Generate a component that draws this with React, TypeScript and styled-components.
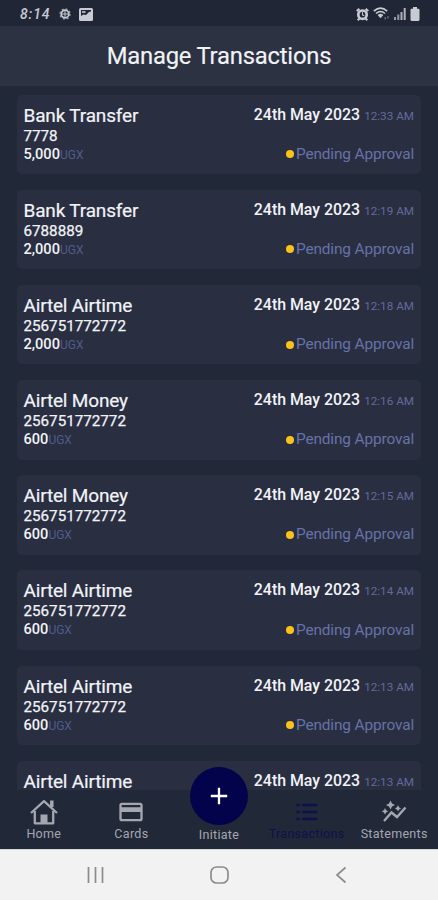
import React from 'react';
import styled, { createGlobalStyle } from 'styled-components';
import { MdCreditCard } from 'react-icons/md';

const GlobalStyle = createGlobalStyle`
  * { box-sizing: border-box; }
  body { margin: 0; background: #212837; font-family: Roboto, sans-serif; }
`;

const Screen = styled.div`
  width: 438px;
  height: 900px;
  display: flex;
  flex-direction: column;
  overflow: hidden;
  background: #212837;
  color: #f1f3f8;
`;

const StatusBar = styled.div`
  flex: 0 0 26px;
  display: flex;
  align-items: center;
  justify-content: space-between;
  padding: 2px 18px 0 20px;
  background: #212636;
  color: #c9cbd2;
`;

const StatusGroup = styled.div<{ $gap: number }>`
  display: flex;
  align-items: center;
  gap: ${(p) => p.$gap}px;
  svg { display: block; }
`;

const Clock = styled.span`
  width: 31px;
  font-size: 14px;
  line-height: 14px;
  font-style: italic;
  font-weight: 500;
  letter-spacing: 0.9px;
`;

const Header = styled.header`
  flex: 0 0 60px;
  display: flex;
  align-items: center;
  justify-content: center;
  background: #2c3242;
`;

const Title = styled.h1`
  margin: 0;
  font-size: 23.8px;
  line-height: 28px;
  font-weight: 400;
  letter-spacing: -0.2px;
  -webkit-text-stroke: 0.15px currentColor;
  white-space: nowrap;
`;

const List = styled.main`
  flex: 0 0 704px;
  display: flex;
  flex-direction: column;
  gap: 15.7px;
  padding: 8.5px 17px 0;
  overflow: hidden;
`;

const Card = styled.article`
  flex: 0 0 79.5px;
  display: flex;
  justify-content: space-between;
  padding: 9px 7px 0;
  border-radius: 5px;
  background: #292e41;
  white-space: nowrap;
`;

const Column = styled.div<{ $end?: boolean }>`
  display: flex;
  flex-direction: column;
  align-items: ${(p) => (p.$end ? 'flex-end' : 'flex-start')};
`;

const Name = styled.div`
  margin-left: -0.5px;
  font-size: 19px;
  line-height: 24px;
  letter-spacing: -0.17px;
  -webkit-text-stroke: 0.2px currentColor;
`;

const Account = styled.div`
  margin-left: -0.5px;
  font-size: 15.2px;
  line-height: 17px;
  -webkit-text-stroke: 0.25px currentColor;
`;

const Amount = styled.div`
  margin-left: -0.5px;
  font-size: 14.6px;
  line-height: 19px;
  font-weight: 500;
`;

const Currency = styled.span`
  font-size: 12px;
  font-weight: 400;
  color: #515c8c;
`;

const When = styled.div`
  font-size: 15.9px;
  line-height: 22.6px;
  font-weight: 500;
`;

const Time = styled.span`
  margin-left: 4px;
  font-size: 11.7px;
  font-weight: 400;
  color: #626b9a;
`;

const Status = styled.div`
  display: flex;
  align-items: center;
  gap: 2px;
  margin-top: 16.6px;
  font-size: 15.4px;
  line-height: 20px;
  letter-spacing: -0.13px;
  color: #6772a8;
`;

const Dot = styled.span`
  width: 8px;
  height: 8px;
  margin-top: 1px;
  border-radius: 50%;
  background: #fbc219;
`;

const TabBar = styled.nav`
  flex: 0 0 59px;
  display: grid;
  grid-template-columns: repeat(5, 87.6px);
  background: #212837;
`;

const Tab = styled.div<{ $active?: boolean }>`
  display: flex;
  flex-direction: column;
  align-items: center;
  padding-top: 8px;
  color: ${(p) => (p.$active ? '#0e1150' : '#a5a7b0')};
  svg { display: block; flex: 0 0 28px; }
`;

const TabLabel = styled.span`
  font-size: 12.5px;
  line-height: 16px;
  letter-spacing: 0.3px;
  white-space: nowrap;
`;

const InitiateTab = styled(Tab)`
  position: relative;
  padding-top: 37px;
`;

const InitiateButton = styled.div`
  position: absolute;
  top: -23px;
  left: 50%;
  width: 58px;
  height: 58px;
  transform: translateX(-50%);
  display: flex;
  align-items: center;
  justify-content: center;
  border-radius: 50%;
  background: #02034b;
  color: #fff;
`;

const SystemBar = styled.div`
  flex: 1;
  display: flex;
  align-items: center;
  justify-content: space-between;
  padding: 0 91px 0 86px;
  background: #f2f2f2;
  border-top: 1px solid #d8d9dc;
  color: #8c8c8c;
  svg { display: block; }
`;

const transactions = [
  ['Bank Transfer', '7778', '5,000', '12:33 AM'],
  ['Bank Transfer', '6788889', '2,000', '12:19 AM'],
  ['Airtel Airtime', '256751772772', '2,000', '12:18 AM'],
  ['Airtel Money', '256751772772', '600', '12:16 AM'],
  ['Airtel Money', '256751772772', '600', '12:15 AM'],
  ['Airtel Airtime', '256751772772', '600', '12:14 AM'],
  ['Airtel Airtime', '256751772772', '600', '12:13 AM'],
  ['Airtel Airtime', '256751772772', '600', '12:13 AM'],
];

const GearIcon = () => (
  <svg width="12" height="12" viewBox="0 0 12 12" fill="none" stroke="currentColor">
    <circle cx="6" cy="6" r="3.8" strokeWidth="1.7" />
    <circle cx="6" cy="6" r="5.1" strokeWidth="1.3" strokeDasharray="2 2" opacity=".7" />
    <path d="M6 3v6M3 6h6" strokeWidth="1" />
  </svg>
);

const PictureIcon = () => (
  <svg width="14" height="13" viewBox="0 0 14 13">
    <rect width="14" height="13" rx="1.5" fill="currentColor" />
    <path d="M2 8l2.5-1.5L7 7l3-3 2-.5V2H2z" fill="#212636" />
    <path d="M3 3.2h3.5v1.6H3z" fill="currentColor" />
  </svg>
);

const AlarmIcon = () => (
  <svg width="13" height="13" viewBox="0 0 13 13" fill="none" stroke="currentColor">
    <path d="M.7 3L3.4.9M12.3 3L9.6.9M1.7 12.2l2-2M11.3 12.2l-2-2" strokeWidth="2" />
    <circle cx="6.5" cy="6.7" r="4.2" strokeWidth="2.7" />
    <path d="M6.5 4.3v2.6l1.8.8" strokeWidth="1.1" />
  </svg>
);

const WifiIcon = () => (
  <svg width="17" height="14" viewBox="0 0 17 14" fill="none" stroke="currentColor">
    <path d="M.8 4.2Q7.5-2 14.2 4.2M3 6.5q4.5-4 9 0" strokeWidth="1.6" />
    <path d="M5 8q2.5-2 5 0l-2.5 3z" fill="currentColor" strokeWidth=".6" />
    <path d="M12.2 10v2.5M15 9v2.5" strokeWidth="1.2" opacity=".5" />
  </svg>
);

const SignalIcon = () => (
  <svg width="12" height="12" viewBox="0 0 12 12" fill="currentColor">
    <path opacity=".7" d="M0 9h2v3H0zM3.3 6.5h2V12h-2z" />
    <path d="M6.5 4h2v8h-2zM9.7 0h2v12h-2z" opacity=".85" />
  </svg>
);

const BatteryIcon = () => (
  <svg width="10" height="14" viewBox="0 0 10 14" fill="currentColor">
    <path d="M3 0h4v1.7h1.5Q9.5 1.700 9.5 3v9.5Q9.5 14 8 14H2Q.5 14 .5 12.5V3q0-1.300 1-1.300H3z" />
  </svg>
);

const HomeIcon = () => (
  <svg width="28" height="28" viewBox="0 0 28 28" fill="none" stroke="currentColor" strokeLinejoin="round">
    <path d="M1 15L14 3.2 27 15" strokeWidth="2.3" />
    <path d="M4.8 13v12.3h18.4V13" strokeWidth="2.3" />
    <path d="M21.8 9V2.5" strokeWidth="3.5" />
    <path d="M10.5 16.5h7v9h-7z" fill="currentColor" stroke="none" />
  </svg>
);

const ListIcon = () => (
  <svg width="24" height="28" viewBox="0 0 24 28" fill="none" stroke="currentColor" strokeWidth="2.6">
    <path d="M1.5 7H5M1.5 14H5M1.5 21H5M7 7h15.5M7 14h15.5M7 21h15.5" />
  </svg>
);

const StatementsIcon = () => (
  <svg width="28" height="28" viewBox="0 0 28 28" fill="currentColor">
    <path d="M4 23l7.5-8.5 5.5 4.500 8.500-9.500" fill="none" stroke="currentColor" strokeWidth="2.4" />
    <path d="M10.5 2.500l1.500 3 3 1.500-3 1.500-1.500 3-1.500-3-3-1.500 3-1.500z" />
    <path d="M5 10l1.100 2.200 2.200 1.100-2.200 1.100L5 16.600l-1.100-2.200-2.200-1.100 2.200-1.100z" />
    <path d="M18 7.300l1.100 2 2 1.100-2 1.100-1.100 2-1.100-2-2-1.100 2-1.100z" />
  </svg>
);

const PlusIcon = () => (
  <svg width="18" height="18" viewBox="0 0 18 18" stroke="currentColor" strokeWidth="2.3">
    <path d="M9 .8v16.4M.8 9h16.4" />
  </svg>
);

export default function App() {
  return (
    <>
      <GlobalStyle />
      <Screen>
        <StatusBar>
          <StatusGroup $gap={8}>
            <Clock>8:14</Clock>
            <GearIcon />
            <PictureIcon />
          </StatusGroup>
          <StatusGroup $gap={4}>
            <AlarmIcon />
            <WifiIcon />
            <SignalIcon />
            <BatteryIcon />
          </StatusGroup>
        </StatusBar>
        <Header>
          <Title>Manage Transactions</Title>
        </Header>
        <List>
          {transactions.map(([name, account, amount, time], i) => (
            <Card key={i}>
              <Column>
                <Name>{name}</Name>
                <Account>{account}</Account>
                <Amount>
                  {amount}
                  <Currency>UGX</Currency>
                </Amount>
              </Column>
              <Column $end>
                <When>
                  24th May 2023
                  <Time>{time}</Time>
                </When>
                <Status>
                  <Dot />
                  Pending Approval
                </Status>
              </Column>
            </Card>
          ))}
        </List>
        <TabBar>
          <Tab>
            <HomeIcon />
            <TabLabel>Home</TabLabel>
          </Tab>
          <Tab>
            <MdCreditCard size={28} />
            <TabLabel>Cards</TabLabel>
          </Tab>
          <InitiateTab>
            <InitiateButton>
              <PlusIcon />
            </InitiateButton>
            <TabLabel>Initiate</TabLabel>
          </InitiateTab>
          <Tab $active>
            <ListIcon />
            <TabLabel>Transactions</TabLabel>
          </Tab>
          <Tab>
            <StatementsIcon />
            <TabLabel>Statements</TabLabel>
          </Tab>
        </TabBar>
        <SystemBar>
          <svg width="18" height="18" viewBox="0 0 18 18" stroke="currentColor" strokeWidth="1.7">
            <path d="M2.5 1v16M9.5 1v16M16.5 1v16" />
          </svg>
          <svg width="20" height="18" viewBox="0 0 20 18" fill="none" stroke="currentColor" strokeWidth="1.7">
            <rect x="1" y="1" width="17" height="16" rx="5.5" />
          </svg>
          <svg width="12" height="18" viewBox="0 0 12 18" fill="none" stroke="currentColor" strokeWidth="1.7">
            <path d="M10.5 1.5L2 9l8.5 7.5" />
          </svg>
        </SystemBar>
      </Screen>
    </>
  );
}
